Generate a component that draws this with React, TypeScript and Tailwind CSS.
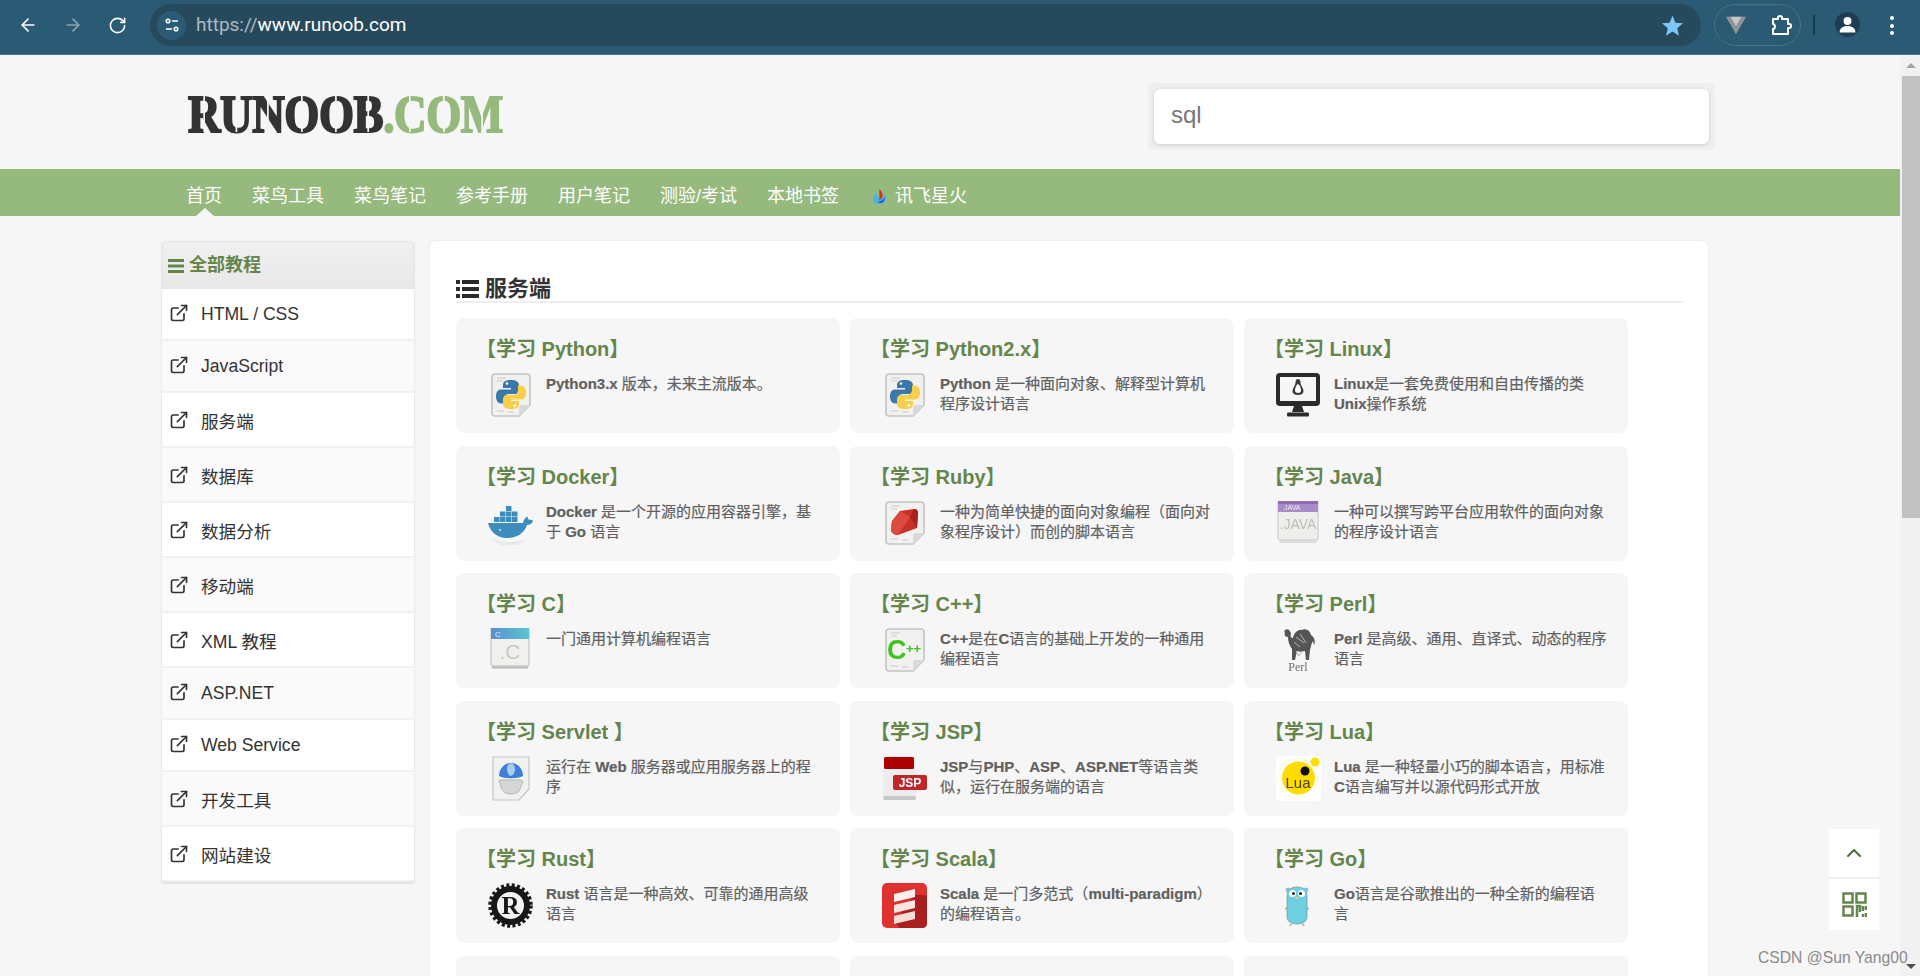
import { ArrowLeft, ArrowRight, RotateCw, ChevronUp, ExternalLink } from "lucide-react";
import type { ReactNode } from "react";

const navItems = ["菜鸟工具", "菜鸟笔记", "参考手册", "用户笔记", "测验/考试", "本地书签"];

const sideItems = [
  { name: "HTML / CSS", tall: false },
  { name: "JavaScript", tall: false },
  { name: "服务端", tall: true },
  { name: "数据库", tall: true },
  { name: "数据分析", tall: true },
  { name: "移动端", tall: true },
  { name: "XML 教程", tall: true },
  { name: "ASP.NET", tall: false },
  { name: "Web Service", tall: false },
  { name: "开发工具", tall: true },
  { name: "网站建设", tall: true },
];

// folded page that most of the language icons sit on
const Doc = ({ children }: { children?: ReactNode }) => (
  <>
    <path d="M7 1H39Q42 1 42 4V32L31 43H7Q4 43 4 40V4Q4 1 7 1Z" fill="#f1f1f0" stroke="#c4c4c4" strokeWidth="1.6" />
    <path d="M9 5h9M9 8h6M9 38h7M20 39h6" stroke="#c9c9c9" strokeWidth="1" />
    <path d="M42 32L31 43V35Q31 32 34 32Z" fill="#d9d9d9" />
    {children}
  </>
);

const Icon = ({ children }: { children: ReactNode }) => (
  <svg viewBox="0 0 45 45" className="w-[45px] h-[45px] shrink-0 blur-[0.3px]">
    {children}
  </svg>
);

const snake = "M23 7c-6 0-8 2-8 5v3h8v1.500H13c-3.500 0-5 3-5 7s2 7 5 7h3v-4.500c0-3 2.500-5 5-5h6c2.500 0 4-2 4-4v-5c0-3-3-5-8-5Z";

const PythonIcon = () => (
  <Icon>
    <Doc>
      <path d={snake} fill="#3b78aa" />
      <path d={snake} fill="#f6d04a" transform="rotate(180 23 21.500)" />
      <circle cx="19" cy="10.500" r="1.300" fill="#fff" />
      <circle cx="27" cy="32.500" r="1.300" fill="#fff" />
    </Doc>
  </Icon>
);

const DockerIcon = () => (
  <Icon>
    <path d="M0 22H35C35.500 19 37 17 39 15.500L41 19C43 18.500 44 19 45 20C44 23 41 24 39 24C36 33 28 37 19 37C8 37 2 30 0 22Z" fill="#3d8dbc" />
    <path d="M6 16h5.500v5H6zM12 16h5.500v5H12zM18 16h5.500v5H18zM24 16h5.500v5H24zM12 10.500h5.500v5H12zM18 10.500h5.500v5H18zM24 10.500h5.500v5H24zM18 5h5.500v5H18z" fill="#3d8dbc" />
    <circle cx="12" cy="29" r="1" fill="#d7e8f2" />
    <path d="M4 38Q22 44 38 38L30 44H12Z" fill="#dcdcdc" opacity="0.5" />
  </Icon>
);

const LinuxIcon = () => (
  <Icon>
    <rect x="0" y="0" width="44" height="33" rx="4" fill="#2b2b2b" />
    <rect x="4" y="4" width="36" height="24" fill="#f7f7f7" />
    <path d="M18 33h8l2 6H16Z" fill="#2b2b2b" />
    <rect x="11" y="39.500" width="22" height="4" rx="1" fill="#2b2b2b" />
    <path d="M22 6c-2 0-2.500 2-2.500 4 0 2-3 5-3 8 0 2.500 2 4 5.500 4s5.500-1.500 5.500-4c0-3-3-6-3-8 0-2-.5-4-2.500-4Z" fill="#3a3a3a" />
    <path d="M22 11c-2 1-3 4-3 6.500 0 1.500 1 2.500 3 2.500s3-1 3-2.500c0-2.500-1-5.500-3-6.500Z" fill="#fff" />
  </Icon>
);

const RubyIcon = () => (
  <Icon>
    <Doc>
      <path d="M18 10L32 8Q36 8 36 12L35 27L16 34Q10 34 9 29L10 20Z" fill="#c9302a" />
      <path d="M18 10L28 16L16 34Q10 34 9 29L10 20Z" fill="#dd4a40" />
      <path d="M32 8Q36 8 36 12L35 27L28 16Z" fill="#a8211c" />
    </Doc>
  </Icon>
);

const JavaIcon = () => (
  <Icon>
    <rect x="2" y="0" width="40" height="39" rx="1.500" fill="#efeeea" stroke="#c4c4c4" />
    <rect x="2" y="0" width="40" height="11" fill="#a88cc8" />
    <rect x="2" y="0" width="40" height="3" fill="#8a6fae" />
    <text x="8" y="9" fontSize="7" fill="#eee" fontFamily="Liberation Sans">JAVA</text>
    <text x="22" y="28" fontSize="14" textAnchor="middle" fill="#bdbdbd" fontFamily="Liberation Sans">.JAVA</text>
    <rect x="4" y="40" width="36" height="2" fill="#dcdcdc" />
  </Icon>
);

const CIcon = () => (
  <Icon>
    <defs>
      <linearGradient id="cbar" x1="0" x2="1" y1="0" y2="0">
        <stop offset="0" stopColor="#5b8fd0" />
        <stop offset="1" stopColor="#5bc4cf" />
      </linearGradient>
    </defs>
    <rect x="3" y="0" width="38" height="38" rx="1" fill="#f1f0ec" stroke="#bbb" />
    <rect x="3" y="0" width="38" height="11" fill="url(#cbar)" />
    <text x="7" y="9" fontSize="8" fill="#e6eef8" fontFamily="Liberation Sans">C</text>
    <text x="22" y="31" fontSize="21" textAnchor="middle" fill="#c7c7c2" fontFamily="Liberation Sans">.C</text>
    <rect x="4" y="38.500" width="36" height="2" fill="#b8b8b8" />
  </Icon>
);

const CppIcon = () => (
  <Icon>
    <Doc>
      <text x="5" y="31" fontSize="27" fontWeight="700" fill="#3fc41c" fontFamily="Liberation Sans">C</text>
      <text x="24" y="25" fontSize="13" fontWeight="700" fill="#3fc41c" fontFamily="Liberation Sans">++</text>
    </Doc>
  </Icon>
);

const PerlIcon = () => (
  <Icon>
    <path d="M9 5C7 2 11 0 13 2L15 5C14 8 15 10 17 10C18 5 22 1 26 2C29 0 34 2 35 7C38 9 40 13 38 17L37 13C35 16 35 19 34 22L33 32H30L29 23C26 24 23 24 21 23L19 32H16L16 21C13 17 12 13 12 9C9 9 8 7 9 5Z" fill="#555" />
    <path d="M20 9l8 6M24 6l6 9M18 14l6 5M20 23l3 5 3-5" stroke="#b5b5b5" strokeWidth="1" fill="none" />
    <text x="22" y="43" fontSize="12" textAnchor="middle" fill="#6e6e6e" fontFamily="Liberation Serif">Perl</text>
  </Icon>
);

const ServletIcon = () => (
  <Icon>
    <path d="M5 1H41V33L31 44H5Z" fill="#f1f1f0" stroke="#c4c4c4" strokeWidth="1.200" />
    <path d="M12 27C10 24 11 24 14 24H32C35 24 36 26 33 30C32 36 28 38 23 38C17 38 13 35 12 27Z" fill="#d6d6d4" stroke="#b5b5b5" />
    <path d="M11 20C11 13 16 7 23 7C30 7 35 13 35 20C30 23 16 23 11 20Z" fill="#3f80d6" />
    <path d="M20 9C23 6 27 8 27 13C27 18 24 20 22 20C19 17 18 12 20 9Z" fill="#a9cdf2" />
  </Icon>
);

const JspIcon = () => (
  <Icon>
    <rect x="1" y="0" width="33" height="44" rx="3" fill="#ececec" />
    <rect x="1" y="40" width="33" height="4" rx="2" fill="#c9c9c9" />
    <rect x="2" y="1" width="30" height="12" rx="1.500" fill="#ad0000" />
    <rect x="11" y="19" width="34" height="15" rx="2" fill="#c02527" />
    <text x="28" y="31" fontSize="12" fontWeight="700" textAnchor="middle" fill="#fff" fontFamily="Liberation Sans">JSP</text>
  </Icon>
);

const LuaIcon = () => (
  <Icon>
    <rect x="0" y="0" width="45" height="45" rx="5" fill="#fff" />
    <circle cx="22" cy="22.500" r="20" fill="none" stroke="#fdf3c2" strokeWidth="1.300" strokeDasharray="1.500 1.500" />
    <circle cx="22.500" cy="22" r="16.500" fill="#fedc00" />
    <circle cx="29" cy="15" r="4.500" fill="#111" />
    <circle cx="39" cy="6" r="4.500" fill="#fedc00" />
    <text x="22" y="32" fontSize="15" textAnchor="middle" fill="#4a4205" fontFamily="Liberation Sans">Lua</text>
  </Icon>
);

const RustIcon = () => (
  <Icon>
    <circle cx="22.500" cy="22.500" r="20.500" fill="none" stroke="#171717" strokeWidth="3.500" strokeDasharray="3 2.400" />
    <circle cx="22.500" cy="22.500" r="16.500" fill="#f3f3f3" stroke="#171717" strokeWidth="6" />
    <text x="22.500" y="31" fontSize="25" fontWeight="700" textAnchor="middle" fill="#171717" fontFamily="Liberation Serif">R</text>
  </Icon>
);

const ScalaIcon = () => (
  <Icon>
    <rect x="0" y="0" width="45" height="45" rx="5" fill="#e03131" />
    <path d="M45 12V40Q45 45 40 45H18L12 39L33 12Z" fill="#a82020" />
    <path d="M12 11L33 6V14L12 19Z" fill="#fdf1ef" />
    <path d="M12 22L33 17V25L12 30Z" fill="#fbe6e2" />
    <path d="M12 33L33 28V36L12 41Z" fill="#f8dcd7" />
  </Icon>
);

const GoIcon = () => (
  <Icon>
    <path d="M11 13C11 7 15 4 21 4C27 4 31 7 31 13V33C31 38 28 41 21 41C14 41 11 38 11 33Z" fill="#6dcfe0" stroke="#7f9ba3" strokeWidth="0.800" />
    <circle cx="12" cy="7" r="2" fill="#6dcfe0" stroke="#7f9ba3" strokeWidth="0.600" />
    <circle cx="30" cy="7" r="2" fill="#6dcfe0" stroke="#7f9ba3" strokeWidth="0.600" />
    <circle cx="16.500" cy="10.500" r="3.500" fill="#fff" />
    <circle cx="25.500" cy="10.500" r="3.500" fill="#fff" />
    <circle cx="17.500" cy="10.500" r="1.500" fill="#222" />
    <circle cx="24.500" cy="10.500" r="1.500" fill="#222" />
    <ellipse cx="21" cy="15" rx="2" ry="1.300" fill="#d8c8a8" />
    <path d="M11 25l-2 1M31 25l2 1M15 41l-1 2M27 41l1 2" stroke="#b9a98c" strokeWidth="1.600" />
  </Icon>
);

const cards = [
  { title: "【学习 Python】", desc: "Python3.x 版本，未来主流版本。", icon: <PythonIcon /> },
  { title: "【学习 Python2.x】", desc: "Python 是一种面向对象、解释型计算机程序设计语言", icon: <PythonIcon /> },
  { title: "【学习 Linux】", desc: "Linux是一套免费使用和自由传播的类Unix操作系统", icon: <LinuxIcon /> },
  { title: "【学习 Docker】", desc: "Docker 是一个开源的应用容器引擎，基于 Go 语言", icon: <DockerIcon /> },
  { title: "【学习 Ruby】", desc: "一种为简单快捷的面向对象编程（面向对象程序设计）而创的脚本语言", icon: <RubyIcon /> },
  { title: "【学习 Java】", desc: "一种可以撰写跨平台应用软件的面向对象的程序设计语言", icon: <JavaIcon /> },
  { title: "【学习 C】", desc: "一门通用计算机编程语言", icon: <CIcon /> },
  { title: "【学习 C++】", desc: "C++是在C语言的基础上开发的一种通用编程语言", icon: <CppIcon /> },
  { title: "【学习 Perl】", desc: "Perl 是高级、通用、直译式、动态的程序语言", icon: <PerlIcon /> },
  { title: "【学习 Servlet 】", desc: "运行在 Web 服务器或应用服务器上的程序", icon: <ServletIcon /> },
  { title: "【学习 JSP】", desc: "JSP与PHP、ASP、ASP.NET等语言类似，运行在服务端的语言", icon: <JspIcon /> },
  { title: "【学习 Lua】", desc: "Lua 是一种轻量小巧的脚本语言，用标准C语言编写并以源代码形式开放", icon: <LuaIcon /> },
  { title: "【学习 Rust】", desc: "Rust 语言是一种高效、可靠的通用高级语言", icon: <RustIcon /> },
  { title: "【学习 Scala】", desc: "Scala 是一门多范式（multi-paradigm）的编程语言。", icon: <ScalaIcon /> },
  { title: "【学习 Go】", desc: "Go语言是谷歌推出的一种全新的编程语言", icon: <GoIcon /> },
];

// latin runs are bold in the reference, the chinese is not
const Desc = ({ text }: { text: string }) => (
  <p className="w-[274px] mt-px text-[15px] leading-5 text-[#606060] [-webkit-text-stroke:0.2px_#606060]">
    {text.split(/([A-Za-z0-9.+-]+)/).map((part, i) =>
      i % 2 ? (
        <b key={i} className="font-bold">
          {part}
        </b>
      ) : (
        part
      )
    )}
  </p>
);

// stencil logo: a thin gap over each letter
const LogoLetter = ({ ch }: { ch: string }) => (
  <span className="relative inline-block">
    {ch}
    <span className="absolute left-1/2 top-[12px] bottom-[12px] w-[2px] -ml-px bg-[#f6f6f6]" />
  </span>
);

const BrowserBar = () => (
  <div className="h-[55px] shrink-0 flex items-start pt-1 bg-[#2b5a75] border-b border-[#4a7a94] text-white">
    <div className="w-[150px] h-[42px] shrink-0 flex items-center gap-[25px] pl-[18px]">
      <ArrowLeft size={20} strokeWidth={2} />
      <ArrowRight size={20} strokeWidth={2} className="text-[#8aa3b2]" />
      <RotateCw size={19} strokeWidth={2} />
    </div>
    <div className="w-[1551px] h-[42px] shrink-0 rounded-full bg-[#27495c] flex items-center pl-[7px] pr-[17px]">
      <div className="w-[29px] h-[29px] rounded-full bg-[#2b5a75] flex items-center justify-center">
        <svg viewBox="0 0 16 16" className="w-4 h-4" fill="none" stroke="#fff" strokeWidth="1.500">
          <circle cx="4" cy="4" r="1.800" />
          <path d="M8 4h6M2 12h6" />
          <circle cx="12" cy="12" r="1.800" />
        </svg>
      </div>
      <div className="ml-[10px] text-[19px] font-['Roboto',sans-serif]">
        <span className="text-[#a9bac5]">https://</span>www.runoob.com
      </div>
      <svg viewBox="0 0 24 24" className="w-[23px] h-[23px] ml-auto" fill="#7cc7f7">
        <path d="M12 1.500l3 7.500 8 .6-6.100 5.200 1.900 7.800L12 18.300l-6.800 4.300 1.900-7.800L1 9.600l8-.6Z" />
      </svg>
    </div>
    <div className="ml-[13px] w-[87px] h-[42px] shrink-0 rounded-full border border-[#4a7186] flex items-center justify-between pl-[10px] pr-[7px]">
      <svg viewBox="0 0 24 24" className="w-[22px] h-[22px]">
        <path d="M1 3H23L12 22Z" fill="#8f9397" />
        <path d="M6 3H18L12 13Z" fill="#c4c6c8" />
      </svg>
      <svg viewBox="0 0 24 24" className="w-[24px] h-[24px]" fill="none" stroke="#fff" strokeWidth="2" strokeLinejoin="round">
        <path d="M4 6H9V4.500C9 2.500 13 2.500 13 4.500V6H19V11H20.500C22.500 11 22.500 15 20.500 15H19V21H4V16C6.500 16 6.500 11 4 11Z" />
      </svg>
    </div>
    <div className="ml-[12px] w-[2px] h-5 mt-[11px] bg-[#1a3a4d]" />
    <div className="ml-[20px] w-[25px] h-[25px] mt-[8px] rounded-full bg-[#1d3e52] flex items-center justify-center">
      <svg viewBox="0 0 24 24" className="w-[19px] h-[19px]" fill="#fff">
        <circle cx="12" cy="7.500" r="5" />
        <path d="M2 22c0-5 4-8 10-8s10 3 10 8Z" />
      </svg>
    </div>
    <div className="ml-[30px] mt-[12px] flex flex-col gap-[3.500px]">
      <span className="w-1 h-1 rounded-full bg-white" />
      <span className="w-1 h-1 rounded-full bg-white" />
      <span className="w-1 h-1 rounded-full bg-white" />
    </div>
  </div>
);

const Scrollbar = () => (
  <div className="w-5 shrink-0 bg-[#f1f1f1] flex flex-col items-end">
    <div className="w-full h-[21px] flex items-center justify-center pl-0.5">
      <div className="w-0 h-0 border-x-[5px] border-x-transparent border-b-[5px] border-b-[#a3a3a3]" />
    </div>
    <div className="w-[18px] h-[442px] bg-[#c1c1c1]" />
    <div className="mt-auto w-full h-5 flex items-center justify-center pl-0.5">
      <div className="w-0 h-0 border-x-[5px] border-x-transparent border-t-[5px] border-t-[#505050]" />
    </div>
  </div>
);

const App = () => {
  return (
    <div className="relative h-[976px] w-full overflow-hidden flex flex-col bg-[#f6f6f6] font-['Liberation_Sans','Noto_Sans_CJK_SC',sans-serif]">
      <BrowserBar />
      <div className="flex-1 flex min-h-0">
        <div className="flex-1 min-w-0 overflow-hidden">
          {/* header */}
          <div className="h-[114px] flex items-start justify-between pl-[188px] pr-[185px]">
            <div className="mt-[29px] text-[53px] leading-[60px] font-bold font-['Liberation_Serif',serif] origin-left scale-x-[0.85] tracking-[-0.5px] text-[#333] [-webkit-text-stroke:2px_#333]">
              {"RUNOOB".split("").map((ch, i) => (
                <LogoLetter key={i} ch={ch} />
              ))}
              <span className="text-[#96b97d] [-webkit-text-stroke:2px_#96b97d]">
                .
                {"COM".split("").map((ch, i) => (
                  <LogoLetter key={i} ch={ch} />
                ))}
              </span>
            </div>
            <div className="mt-[28px] w-[567px] h-[67px] p-1.5 rounded bg-[#efefed]">
              <div className="h-[55px] pb-1 rounded-md bg-white shadow-[0_1px_4px_rgba(0,0,0,0.15)] flex items-center pl-[17px] text-[24px] text-[#777]">
                sql
              </div>
            </div>
          </div>

          {/* nav */}
          <div className="relative h-[47px] bg-[#96b97d] flex items-center gap-[30px] pl-[186px] pt-2 text-[18px] text-white">
            <span>首页</span>
            {navItems.map((item) => (
              <span key={item}>{item}</span>
            ))}
            <span className="ml-[3px] flex items-center gap-2">
              <svg viewBox="0 0 16 18" className="w-[15px] h-[17px]">
                <path d="M5 5C2 8 1 10 1 12C1 15 4 17 8 17C12 17 15 15 15 11C15 9 14 7 13 6C13 9 11 11 8 11C6 11 5 8 5 5Z" fill="#45b4ea" />
                <path d="M8 1C10 3 12 6 11 10C10 12 8 13 7 12C9 10 7 5 8 1Z" fill="#e0301e" />
                <path d="M6 14C9 15 12 13 13 10C14 13 12 16 8 16Z" fill="#1f55c4" />
              </svg>
              讯飞星火
            </span>
            <div className="absolute left-[196px] bottom-0 w-0 h-0 border-x-[9px] border-x-transparent border-b-[8px] border-b-[#f6f6f6]" />
          </div>

          {/* body */}
          <div className="flex items-start gap-4 pl-[162px] pt-[25px]">
            <div className="w-[252px] shrink-0 shadow-[0_1px_2px_rgba(0,0,0,0.15)]">
              <div className="h-12 flex items-center gap-[5px] pl-[5px] rounded-t-sm border-t border-x border-[#e4e4e4] bg-gradient-to-b from-[#f0f0f0] to-[#e8e8e8] text-[18px] font-bold text-[#64854c]">
                <svg viewBox="0 0 16 14" className="w-4 h-[14px]" fill="#64854c">
                  <rect width="16" height="3" />
                  <rect y="5.500" width="16" height="3" />
                  <rect y="11" width="16" height="3" />
                </svg>
                全部教程
              </div>
              {sideItems.map((item, i) => (
                <div
                  key={item.name}
                  className={`flex items-center gap-[12px] pl-[7px] border-b-2 border-[#f1f1f1] text-[17.6px] text-[#333] ${
                    item.tall ? "h-[55px] pt-[6px]" : "h-[52px]"
                  } ${i % 2 === 0 ? "bg-white" : "bg-[#fafafa]"}`}
                >
                  <ExternalLink
                    size={20}
                    strokeWidth={2}
                    className={`text-[#333] ${item.tall ? "mb-[5px]" : "mb-[2px]"}`}
                  />
                  {item.name}
                </div>
              ))}
            </div>

            <div className="w-[1278px] shrink-0 rounded-md bg-white shadow-[0_0_2px_rgba(0,0,0,0.1)] pl-[26px] pr-[24px] pt-[30px]">
              <div className="h-[32px] pt-[5px] flex items-center gap-1.5 border-b-2 border-[#eeeeee] text-[22px] font-bold text-[#333]">
                <svg viewBox="0 0 23 18" className="w-[23px] h-[18px]" fill="#2b2b2b">
                  <rect width="4" height="4" />
                  <rect x="6" width="17" height="4" />
                  <rect y="7" width="4" height="4" />
                  <rect x="6" y="7" width="17" height="4" />
                  <rect y="14" width="4" height="4" />
                  <rect x="6" y="14" width="17" height="4" />
                </svg>
                服务端
              </div>
              <div className="mt-[15px] grid grid-cols-[384px_384px_384px] gap-x-2.5 gap-y-[12.500px]">
                {cards.map((card) => (
                  <div key={card.title} className="h-[115px] rounded-lg bg-[#f6f6f6] pt-[18px] pl-[20px]">
                    <div className="text-[20px] leading-[26px] font-bold text-[#64854c]">{card.title}</div>
                    <div className="mt-[11px] ml-[12px] flex items-start gap-[13px]">
                      {card.icon}
                      <Desc text={card.desc} />
                    </div>
                  </div>
                ))}
                <div className="h-[115px] rounded-lg bg-[#f6f6f6]" />
                <div className="h-[115px] rounded-lg bg-[#f6f6f6]" />
                <div className="h-[115px] rounded-lg bg-[#f6f6f6]" />
              </div>
            </div>
          </div>
        </div>
        <Scrollbar />
      </div>

      {/* back to top / qr widget */}
      <div className="absolute left-[1829px] top-[829px] w-[50px] h-[101px] bg-white flex flex-col">
        <div className="h-[50px] border-b-2 border-[#f1f1f1] flex items-center justify-center text-[#4f6b3a]">
          <ChevronUp size={24} strokeWidth={2} />
        </div>
        <div className="flex-1 flex items-center justify-center">
          <svg viewBox="0 0 25 25" className="w-[25px] h-[25px]" fill="none" stroke="#64854c" strokeWidth="2.500">
            <rect x="1.500" y="1.500" width="9" height="9" />
            <rect x="14.500" y="1.500" width="9" height="9" />
            <rect x="1.500" y="14.500" width="9" height="9" />
            <path d="M15 25V14h3v6M21 14v5M24 14v4M21 22v3M24 21v4" />
          </svg>
        </div>
      </div>

      <div className="absolute left-[1758px] top-[949px] text-[15.7px] leading-[18px] text-[#8a8a8a]">CSDN @Sun Yang00</div>
    </div>
  );
};

export default App;
